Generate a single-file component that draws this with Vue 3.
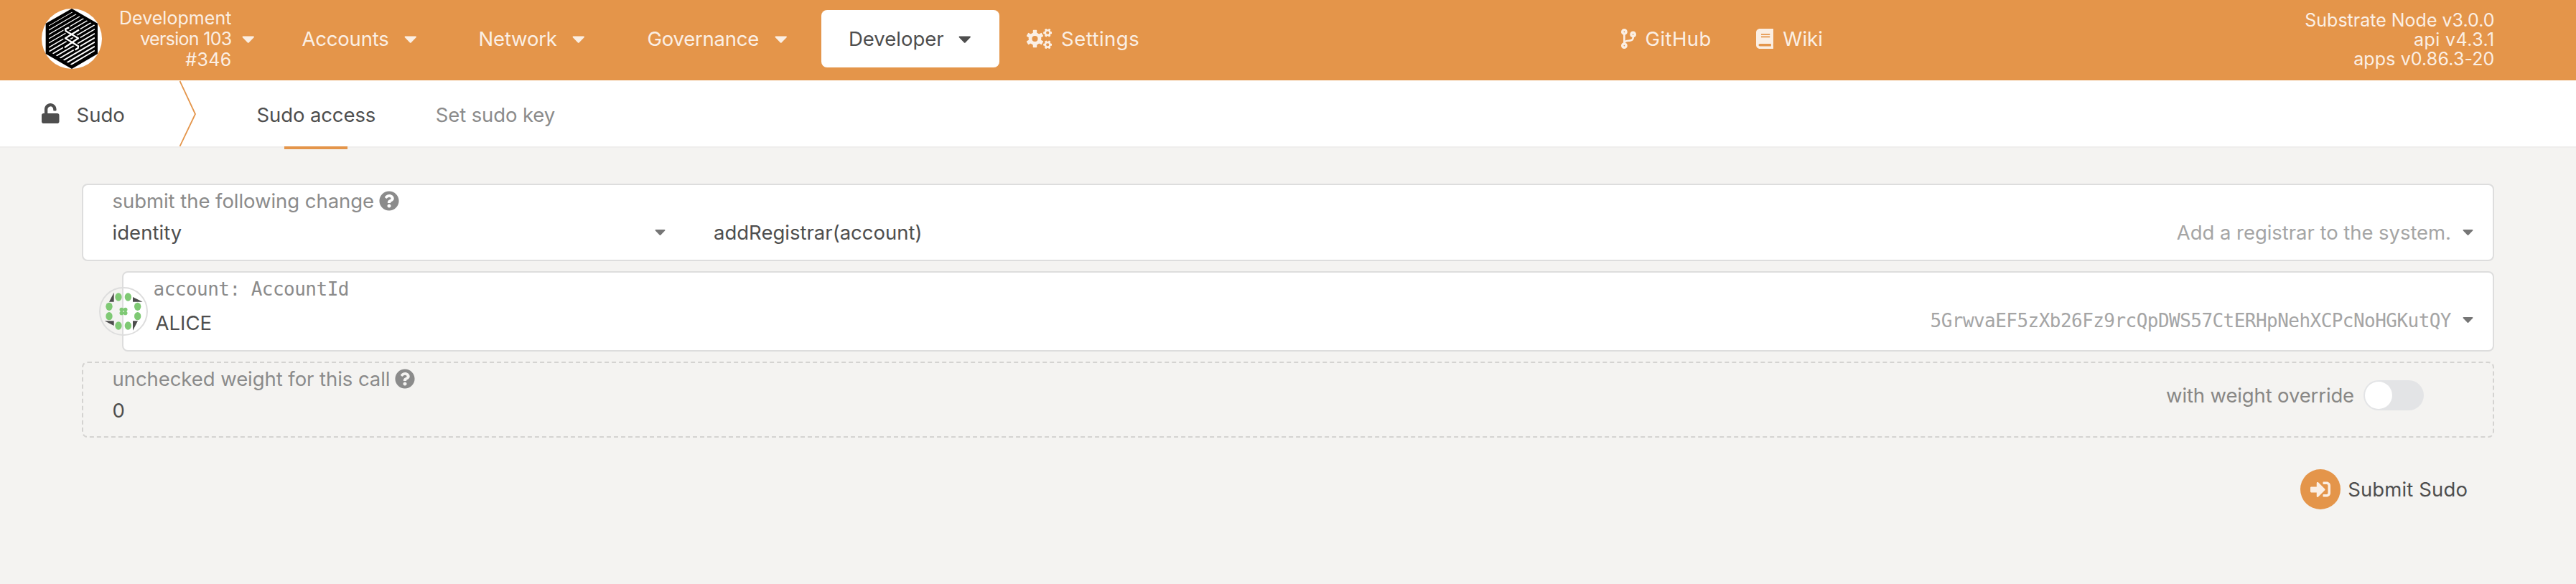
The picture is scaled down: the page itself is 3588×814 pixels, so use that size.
<script setup>
import { h } from 'vue'

const icons = {
  caret: [320, 'M31.3 192h257.3c17.8 0 26.7 21.5 14.1 34.1L174.1 354.7c-7.8 7.8-20.5 7.8-28.3 0L17.2 226.1C4.6 213.5 13.5 192 31.3 192z'],
  help: [512, 'M504 256c0 136.997-111.043 248-248 248S8 392.997 8 256C8 119.083 119.043 8 256 8s248 111.083 248 248zM262.655 90c-54.497 0-89.255 22.957-116.549 63.758-3.536 5.286-2.353 12.415 2.715 16.258l34.699 26.31c5.205 3.947 12.621 3.008 16.665-2.122 17.864-22.658 30.113-35.797 57.303-35.797 20.429 0 45.698 13.148 45.698 32.958 0 14.976-12.363 22.667-32.534 33.976C247.128 238.528 216 254.941 216 296v4c0 6.627 5.373 12 12 12h56c6.627 0 12-5.373 12-12v-1.333c0-28.462 83.186-29.647 83.186-106.667 0-58.002-60.165-102-116.531-102zM256 338c-25.365 0-46 20.635-46 46 0 25.364 20.635 46 46 46s46-20.636 46-46c0-25.365-20.635-46-46-46z'],
  unlock: [448, 'M400 256H152V152.9c0-39.6 31.7-72.5 71.3-72.9 40-.4 72.7 32.1 72.7 72v16c0 13.3 10.7 24 24 24h32c13.3 0 24-10.7 24-24v-16C376 68 307.5-.3 223.5 0 139.5.3 72 69.5 72 153.5V256H48c-26.5 0-48 21.5-48 48v160c0 26.5 21.5 48 48 48h352c26.5 0 48-21.5 48-48V304c0-26.5-21.5-48-48-48z'],
  branch: [384, 'M384 144c0-44.2-35.8-80-80-80s-80 35.8-80 80c0 36.4 24.3 67.1 57.5 76.8-.6 16.1-4.2 28.5-11 36.9-15.4 19.2-49.3 22.4-85.2 25.7-28.2 2.6-57.4 5.4-81.3 16.9v-144c32.5-10.2 56-40.5 56-76.3 0-44.2-35.8-80-80-80S0 35.8 0 80c0 35.8 23.5 66.1 56 76.3v199.3C23.5 365.9 0 396.2 0 432c0 44.2 35.8 80 80 80s80-35.8 80-80c0-34-21.2-63.1-51.2-74.6 3.1-5.2 7.8-9.8 14.9-13.4 16.2-8.2 40.4-10.4 66.1-12.8 42.2-3.9 90-8.4 118.2-43.4 14-17.4 21.1-39.8 21.6-67.9 31.6-10.8 54.4-40.7 54.4-75.9zM80 64c8.8 0 16 7.2 16 16s-7.2 16-16 16-16-7.2-16-16 7.2-16 16-16zm0 384c-8.8 0-16-7.2-16-16s7.2-16 16-16 16 7.2 16 16-7.2 16-16 16zm224-320c8.8 0 16 7.2 16 16s-7.2 16-16 16-16-7.2-16-16 7.2-16 16-16z'],
  book: [448, 'M448 360V24c0-13.3-10.7-24-24-24H96C43 0 0 43 0 96v320c0 53 43 96 96 96h328c13.3 0 24-10.7 24-24v-16c0-7.5-3.5-14.3-8.9-18.7-4.2-15.4-4.2-59.3 0-74.7 5.4-4.3 8.9-11.1 8.9-18.6zM128 134c0-3.3 2.7-6 6-6h212c3.3 0 6 2.7 6 6v20c0 3.3-2.7 6-6 6H134c-3.3 0-6-2.7-6-6v-20zm0 64c0-3.3 2.7-6 6-6h212c3.3 0 6 2.7 6 6v20c0 3.3-2.7 6-6 6H134c-3.3 0-6-2.7-6-6v-20zm253.4 250H96c-17.7 0-32-14.3-32-32 0-17.6 14.4-32 32-32h285.4c-1.9 17.1-1.9 46.9 0 64z'],
  signIn: [512, 'M416 448h-84c-6.6 0-12-5.4-12-12v-40c0-6.6 5.4-12 12-12h84c17.7 0 32-14.3 32-32V160c0-17.7-14.3-32-32-32h-84c-6.6 0-12-5.4-12-12V76c0-6.6 5.4-12 12-12h84c53 0 96 43 96 96v192c0 53-43 96-96 96zm-47-201L201 79c-15-15-41-4.5-41 17v96H24c-13.3 0-24 10.7-24 24v96c0 13.3 10.7 24 24 24h136v96c0 21.5 26 32 41 17l168-168c9.3-9.4 9.3-24.6 0-34z'],
}

const Icon = ({ name, size = 28 }) => {
  const [w, d] = icons[name]
  return h('svg', { viewBox: `0 0 ${w} 512`, width: (w * size) / 512, height: size, fill: 'currentColor' }, [h('path', { d })])
}
Icon.props = ['name', 'size']

const menus = [
  { label: 'Accounts', cls: 'accounts' },
  { label: 'Network', cls: 'network' },
  { label: 'Governance', cls: 'governance' },
  { label: 'Developer', cls: 'developer' },
]

// Each cog: centre, ring radius and width, tooth width, outer radius, first tooth angle
const cogs = [
  { x: 210, y: 256, r: 118, s: 88, tw: 100, R: 222, a: 0 },
  { x: 534, y: 104, r: 62, s: 46, tw: 56, R: 110, a: 30 },
  { x: 534, y: 408, r: 62, s: 46, tw: 56, R: 110, a: 30 },
]

const hatch = Array.from({ length: 13 }, (_, i) => ({ y: 108 + i * 18, w: 3 + i * 0.28 }))

const dots = [[135, 102], [175, 102], [215, 142], [215, 182], [175, 222], [135, 222], [96, 182], [96, 142]]
</script>

<template>
  <div class="page">
    <header class="topbar">
      <div class="left">
        <svg class="logo" viewBox="54 36 252 252">
          <defs>
            <clipPath id="hexInner"><polygon points="180,49 276,105 276,214 180,272 84,214 84,105" /></clipPath>
          </defs>
          <circle cx="180" cy="162" r="126" fill="#fff" />
          <polygon points="180,36 288,98 288,225 180,288 71,225 71,98" fill="#000" />
          <g clip-path="url(#hexInner)" stroke="#fff">
            <line v-for="l in hatch" :key="l.y" x1="84" :y1="l.y" x2="276" :y2="l.y - 112" :stroke-width="l.w" />
          </g>
          <g fill="none" stroke-linecap="round" stroke-linejoin="round">
            <g stroke="#000" stroke-width="17">
              <path d="M166 116L153 122L155 130L207 160L152 197" />
              <path d="M208 126L153 160L207 193L206 201L196 207" />
            </g>
            <g stroke="#fff" stroke-width="7">
              <path d="M166 116L153 122L155 130L207 160L152 197" />
              <path d="M208 126L153 160L207 193L206 201L196 207" />
            </g>
          </g>
        </svg>
        <div class="chain">
          <div class="c1">Development</div>
          <div class="c2">version 103</div>
          <div class="c3">#346</div>
        </div>
        <Icon name="caret" class="chain-caret" />
        <nav class="menu">
          <a v-for="m in menus" :key="m.label" :class="['item', m.cls]"><span>{{ m.label }}</span><Icon name="caret" /></a>
        </nav>
        <a class="settings">
          <svg width="35" height="28" viewBox="0 0 640 512">
            <g v-for="(c, i) in cogs" :key="i" :transform="`translate(${c.x} ${c.y})`" fill="currentColor">
              <circle :r="c.r" fill="none" stroke="currentColor" :stroke-width="c.s" />
              <rect
                v-for="n in 6" :key="n" :x="-c.tw / 2" :y="-c.R" :width="c.tw" :height="c.R - c.r" rx="14"
                :transform="`rotate(${c.a + n * 60})`"
              />
            </g>
          </svg>
          <span>Settings</span>
        </a>
      </div>
      <div class="links">
        <a class="link github"><Icon name="branch" /><span>GitHub</span></a>
        <a class="link"><Icon name="book" /><span>Wiki</span></a>
      </div>
      <div class="versions">
        <div>Substrate Node v3.0.0</div>
        <div class="api">api v4.3.1</div>
        <div class="apps">apps v0.86.3-20</div>
      </div>
    </header>

    <div class="tabs">
      <div class="title"><Icon name="unlock" /><span>Sudo</span></div>
      <svg class="chevron" width="24" height="92" viewBox="0 0 24 92"><path d="M0.5 1L22 47L0.5 92" fill="none" stroke="#e4954a" stroke-width="1.8" /></svg>
      <a class="tab active">Sudo access</a>
      <a class="tab">Set sudo key</a>
    </div>

    <main>
      <section class="card call">
        <div class="label submit-label"><span>submit the following change</span><Icon name="help" /></div>
        <div class="row">
          <div class="section-dd"><span class="identity">identity</span><Icon name="caret" size="24" class="dd" /></div>
          <div class="method-dd">
            <span class="method">addRegistrar(account)</span>
            <span class="desc">Add a registrar to the system.</span>
            <Icon name="caret" size="24" class="dd" />
          </div>
        </div>
      </section>

      <section class="card account">
        <svg class="identicon" viewBox="54 60 204 204">
          <circle cx="156" cy="162" r="99" fill="none" stroke="#ddd" stroke-width="6" />
          <g fill="#4d4d4d">
            <polygon points="116,83 116,122 96,122" />
            <polygon points="195,102 236,122 195,122" />
            <polygon points="77,202 116,202 116,222" />
            <polygon points="195,202 216,202 195,242" />
          </g>
          <g fill="#7fc974">
            <ellipse v-for="d in dots" :key="d.join()" :cx="d[0]" :cy="d[1]" rx="14" ry="17" />
            <circle cx="148" cy="154.500" r="8.500" /><circle cx="164" cy="154.500" r="8.500" />
            <circle cx="148" cy="169.500" r="8.500" /><circle cx="164" cy="169.500" r="8.500" />
          </g>
        </svg>
        <div class="label mono">account: AccountId</div>
        <div class="row">
          <span class="name">ALICE</span>
          <span class="address mono">5GrwvaEF5zXb26Fz9rcQpDWS57CtERHpNehXCPcNoHGKutQY</span>
          <Icon name="caret" size="24" class="dd" />
        </div>
      </section>

      <section class="card weight">
        <div>
          <div class="label weight-label"><span>unchecked weight for this call</span><Icon name="help" /></div>
          <div class="row">0</div>
        </div>
        <div class="override"><span>with weight override</span><i class="toggle"></i></div>
      </section>

      <div class="actions">
        <button class="submit"><i class="round"><Icon name="signIn" /></i><span>Submit Sudo</span></button>
      </div>
    </main>
  </div>
</template>

<style>
body { background: #f4f3f1; }
</style>

<style scoped>
.page {
  min-height: 814px;
  background: #f4f3f1;
  color: #4e4e4e;
  font: 27.5px/28px Inter, "Liberation Sans", sans-serif;
  white-space: nowrap;
}
svg { display: block; flex: none; }
.topbar {
  box-sizing: border-box;
  height: 112px;
  padding-bottom: 4px;
  display: grid;
  grid-template-columns: 2257.5px auto 1fr;
  align-items: center;
  background: #e4954a;
  color: #fbefe4;
}
.left, .links, .link, .settings, .menu, .item, .title, .tabs { display: flex; align-items: center; }
.left { padding-left: 58px; }
.logo { width: 84px; height: 84px; }
.chain { width: 180.5px; text-align: right; font-size: 25px; line-height: 29px; }
.c1 { letter-spacing: .05px; }
.c2 { letter-spacing: -.7px; }
.c3 { letter-spacing: .33px; }
.chain-caret { margin-left: 14px; }
.menu { margin-left: 26px; gap: 8px; }
.item { box-sizing: border-box; height: 80px; justify-content: space-between; padding-right: 40px; border-radius: 8px; }
.accounts { width: 240px; padding-left: 40.5px; letter-spacing: -.19px; }
.network { width: 226px; padding-left: 38.5px; letter-spacing: -.18px; }
.governance { width: 274px; padding-left: 39.5px; letter-spacing: -.23px; }
.developer { width: 248px; padding-left: 38px; background: #fff; color: #4e4e4e; }
.settings { margin-left: 38px; gap: 13px; letter-spacing: .49px; }
.links { gap: 62px; }
.link { gap: 13px; }
.github { letter-spacing: .44px; }
.versions { padding: 3px 113.5px 0 0; text-align: right; font-size: 25px; line-height: 27px; }
.api { letter-spacing: .4px; }
.apps { letter-spacing: .12px; }

.tabs { height: 92px; padding-left: 58px; background: #fff; border-bottom: 2px solid #efeeed; }
.title { width: 192px; gap: 24px; }
.title span, .tab { padding-top: 4px; }
.tab { box-sizing: border-box; height: 92px; line-height: 88px; margin-left: 83.6px; position: relative; letter-spacing: -.12px; color: #8b8b8b; }
.active { color: #4e4e4e; }
.active::after { content: ""; position: absolute; left: 50%; bottom: -4px; width: 88px; height: 4px; margin-left: -44.5px; background: #e4954a; }

main { padding: 50px 114px 0; }
.card { box-sizing: border-box; background: #fff; border: 2px solid #ddd; border-radius: 8px; }
.label { display: flex; gap: 7px; color: #8b8b8b; }
.row { display: flex; align-items: center; height: 28px; margin-top: 16px; }
.dd { color: #767676; }
.mono { font-family: "DejaVu Sans Mono", monospace; font-size: 26px; }

.call { height: 108px; padding: 8px 27px 0 40.5px; }
.submit-label { letter-spacing: -.05px; }
.section-dd { display: flex; align-items: center; justify-content: space-between; width: 770.5px; margin-right: 67px; }
.method-dd { display: flex; align-items: center; flex: 1; }
.call .dd { position: relative; top: -1px; }
.identity { letter-spacing: .05px; }
.desc { margin: 0 16px 0 auto; color: #a5a5a5; letter-spacing: -.05px; }

.account { position: relative; height: 112px; margin: 14px 0 0 56px; padding: 9px 27px 0 41.5px; }
.identicon { position: absolute; left: -34px; top: 20px; width: 68px; height: 68px; }
.account .label { letter-spacing: -.52px; }
.account .row { height: 22px; margin-top: 19px; padding-left: 3px; }
.name { padding-top: 6px; }
.address { margin: 0 16px 0 auto; color: #a5a5a5; letter-spacing: -.54px; }
.account .dd { position: relative; top: -2px; }

.weight { height: 106px; margin-top: 14px; padding: 8px 96px 0 40.5px; display: flex; justify-content: space-between; background: none; border: 2px dashed #d4d3d1; }
.weight-label { letter-spacing: -.06px; }
.override { display: flex; align-items: center; height: 42px; margin-top: 16px; gap: 13px; color: #888785; letter-spacing: -.14px; }
.toggle { box-sizing: border-box; width: 84px; height: 42px; padding: 2px; border-radius: 21px; background: #e3e4e6; }
.toggle::before { content: ""; display: block; width: 38px; height: 38px; border-radius: 50%; background: #fff; }

.actions { display: flex; justify-content: flex-end; margin-top: 44px; padding-right: 37px; }
.submit { display: flex; align-items: center; gap: 10px; padding: 0; border: 0; background: none; color: #4e4e4e; font: inherit; letter-spacing: .12px; }
.round { display: flex; align-items: center; justify-content: center; width: 56px; height: 56px; border-radius: 50%; background: #e4954a; color: #fbefe4; }
</style>
